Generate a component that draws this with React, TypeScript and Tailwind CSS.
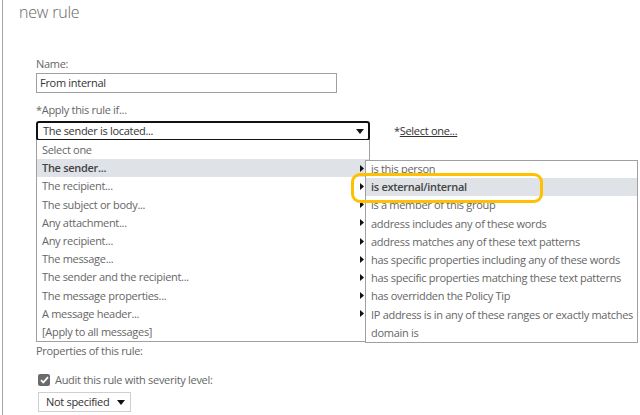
const mainItems = [
  'Select one',
  'The sender...',
  'The recipient...',
  'The subject or body...',
  'Any attachment...',
  'Any recipient...',
  'The message...',
  'The sender and the recipient...',
  'The message properties...',
  'A message header...',
  '[Apply to all messages]',
];

const subItems = [
  'is this person',
  'is external/internal',
  'is a member of this group',
  'address includes any of these words',
  'address matches any of these text patterns',
  'has specific properties including any of these words',
  'has specific properties matching these text patterns',
  'has overridden the Policy Tip',
  'IP address is in any of these ranges or exactly matches',
  'domain is',
];

const CaretDown = () => (
  <svg width="8" height="5" viewBox="0 0 8 5" className="shrink-0">
    <path d="M0 0h8L4 5z" fill="#111" />
  </svg>
);

const CaretRight = () => (
  <svg width="4" height="7" viewBox="0 0 4 7" className="shrink-0">
    <path d="M0 0l4 3.5L0 7z" fill="#111" />
  </svg>
);

export default function App() {
  return (
    <div
      className="w-[640px] h-[415px] bg-white flex overflow-hidden text-[11px] tracking-[-0.3px] text-[#666]"
      style={{ fontFamily: '"Open Sans", "Noto Sans", sans-serif' }}
    >
      <div className="w-[2px] shrink-0" />
      <div className="flex-1 border-l border-[#a6a6a6] flex flex-col">
        {/* Header */}
        <h1 className="pl-[16px] mt-[2px] h-[20px] leading-[20px] text-[16px] tracking-[-0.2px] font-light text-[#666]">
          new rule
        </h1>

        {/* Form */}
        <div className="pl-[33px] flex flex-col">
          <label className="mt-[34px] h-[16px] leading-[16px]">Name:</label>
          <div className="mt-[1px] w-[301px] h-[20px] border border-[#a0a0a0] px-[3px] leading-[18px] text-[#333]">
            From internal
          </div>

          <label className="mt-[9px] h-[16px] leading-[16px]">*Apply this rule if...</label>
          <div className="mt-[3px] flex items-center">
            <div className="relative w-[334px] h-[20px]">
              <div className="h-full border-2 border-[#111] rounded-[3px] flex items-center justify-between pl-[5px] pr-[4px] text-[#333]">
                <span className="leading-[16px]">The sender is located...</span>
                <CaretDown />
              </div>

              {/* Dropdown list */}
              <div className="absolute left-0 top-[19px] w-[334px] bg-white border border-t-0 border-[#a0a0a0] pt-[1px] z-10">
                {mainItems.map((item, i) => (
                  <div
                    key={item}
                    className={`h-[18.2px] flex items-center justify-between pl-[5px] pr-[5px] ${
                      i === 1 ? 'bg-[#dfe2e7] font-semibold text-[#444]' : ''
                    }`}
                  >
                    <span className="leading-[16px]">{item}</span>
                    {i >= 1 && i <= 9 && <CaretRight />}
                  </div>
                ))}
              </div>

              {/* Sub menu */}
              <div className="absolute left-[329px] top-[39px] w-[273px] bg-white border border-[#a0a0a0] overflow-hidden z-20">
                <div className="-mt-[1px]">
                  {subItems.map((item, i) => (
                    <div
                      key={item}
                      className={`h-[18.2px] flex items-center pl-[5px] ${
                        i === 1 ? 'bg-[#dfe2e7] font-semibold text-[#444]' : ''
                      }`}
                    >
                      <span className="leading-[16px] whitespace-nowrap">{item}</span>
                    </div>
                  ))}
                </div>
              </div>

              {/* Highlight ring */}
              <div className="absolute left-[315px] top-[52px] w-[192px] h-[30px] border-[3px] border-[#ffc000] rounded-[9px] z-30" />
            </div>
            <span className="ml-[24px] text-[#333]">
              *<span className="underline">Select one...</span>
            </span>
          </div>

          <div className="mt-[202px] h-[16px] leading-[16px]">Properties of this rule:</div>

          <div className="mt-[13px] h-[16px] flex items-center">
            <div className="ml-[2px] w-[12px] h-[12px] rounded-[2px] bg-[#6b6b6b] flex items-center justify-center">
              <svg width="9" height="8" viewBox="0 0 9 8">
                <path d="M1 4.2l2.3 2.3L8 1.2" stroke="#fff" strokeWidth="1.8" fill="none" />
              </svg>
            </div>
            <span className="ml-[5px] leading-[16px]">Audit this rule with severity level:</span>
          </div>

          <div className="mt-[4px] ml-[2px] w-[93px] h-[20px] border border-[#cfcfcf] flex items-center justify-between pl-[7px] pr-[5px] text-[#333]">
            <span className="leading-[16px] whitespace-nowrap">Not specified</span>
            <CaretDown />
          </div>
        </div>
      </div>
    </div>
  );
}
